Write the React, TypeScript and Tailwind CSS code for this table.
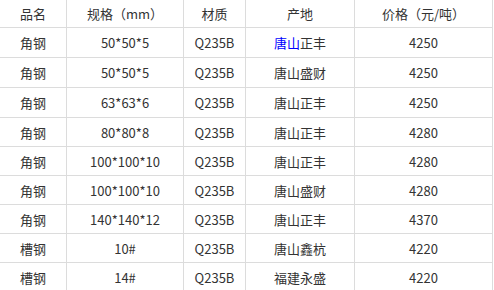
import React from "react";

const rows: { name: string; spec: string; mat: string; origin: React.ReactNode; price: string; h: string }[] = [
  { name: "角钢", spec: "50*50*5", mat: "Q235B", origin: <><span className="text-[#0000ff]">唐山</span>正丰</>, price: "4250", h: "h-[30px]" },
  { name: "角钢", spec: "50*50*5", mat: "Q235B", origin: "唐山盛财", price: "4250", h: "h-[30px]" },
  { name: "角钢", spec: "63*63*6", mat: "Q235B", origin: "唐山正丰", price: "4250", h: "h-[30px]" },
  { name: "角钢", spec: "80*80*8", mat: "Q235B", origin: "唐山正丰", price: "4280", h: "h-[29px]" },
  { name: "角钢", spec: "100*100*10", mat: "Q235B", origin: "唐山正丰", price: "4280", h: "h-[29px]" },
  { name: "角钢", spec: "100*100*10", mat: "Q235B", origin: "唐山盛财", price: "4280", h: "h-[29px]" },
  { name: "角钢", spec: "140*140*12", mat: "Q235B", origin: "唐山正丰", price: "4370", h: "h-[29px]" },
  { name: "槽钢", spec: "10#", mat: "Q235B", origin: "唐山鑫杭", price: "4220", h: "h-[29px]" },
  { name: "槽钢", spec: "14#", mat: "Q235B", origin: "福建永盛", price: "4220", h: "h-[29px]" },
];

const cell = "flex items-center justify-center border-r border-b border-[#dcdcdc]";

export default function App() {
  return (
    <div className="w-[494px] h-[290px] overflow-hidden bg-white text-[#333] text-[13px] leading-none" style={{ fontFamily: '"Noto Sans CJK SC", "Noto Sans", sans-serif' }}>
      <div className="grid grid-cols-[67px_117px_62px_109px_138px]">
        <div className={`${cell} h-[28px]`}>品名</div>
        <div className={`${cell} h-[28px]`}>规格（mm）</div>
        <div className={`${cell} h-[28px]`}>材质</div>
        <div className={`${cell} h-[28px]`}>产地</div>
        <div className={`${cell} h-[28px]`}>价格（元/吨）</div>
        {rows.map((r, i) => (
          <React.Fragment key={i}>
            <div className={`${cell} ${r.h}`}>{r.name}</div>
            <div className={`${cell} ${r.h}`}>{r.spec}</div>
            <div className={`${cell} ${r.h}`}>{r.mat}</div>
            <div className={`${cell} ${r.h}`}>{r.origin}</div>
            <div className={`${cell} ${r.h}`}>{r.price}</div>
          </React.Fragment>
        ))}
      </div>
    </div>
  );
}
